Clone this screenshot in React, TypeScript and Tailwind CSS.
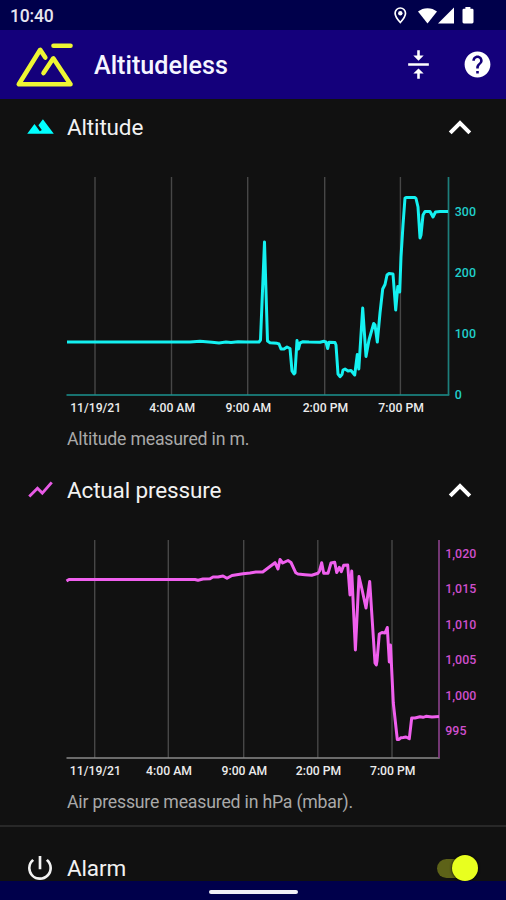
import React from 'react';
import { MdHelp, MdPowerSettingsNew, MdTerrain, MdVerticalAlignCenter } from 'react-icons/md';

interface Tick {
  pos: number;
  label: string;
}

interface ChartProps {
  points: string;
  stroke: string;
  axisColor: string;
  baseColor: string;
  labelColor: string;
  right: number;
  xTicks: Tick[];
  yTicks: Tick[];
}

const altitudePoints =
  '67,165 190,165 200,164.2 212,165.3 219,166 226,165 231,165.5 238,164.7 246,165 259,165 260.5,163 264.5,65 267.5,164 270,165.7 277,166.3 279,167 281,172 284,172 287,170 290,171.5 292,194 294,197 295,196 297,163.5 298.5,172 300,166 303,164.7 309,165 320,165.3 324,164.3 326,165 327.7,171.5 329,165.3 335,165.5 336,168 338,197 340,199.7 342,197.5 343,193 345,192 348,194 351,193.5 354.7,198 357.3,177.5 358.8,192 362.7,131 366,179.5 369,163 373.7,146.5 375,148 377.3,165 380,136 382.7,112 385,107.5 387,98 389,96.5 393,97 395.7,133 397.8,109.5 399.7,115 401,80 403,48 405,21 406,20.5 415,20.5 416,21.5 418,30 420,61 421,58 423,38 425,34.5 430,34.5 433,40 435.5,35 440,34.5 448,34.5';

const pressurePoints =
  '66.5,41 69,39.5 110,39.5 195,39.5 198,40.3 203,39 210,38.7 213,37 218,37 223,36 227,38.3 232,35.5 243,33.7 250,33 256,32 262.7,32 268,28 275,22.7 278,29 280,19.5 282.7,23 288,20.5 291,22.5 295.7,32.7 298,34 305,34.7 311.7,35.3 318,33.3 319.5,31 321.7,22.7 323.7,33.3 328,33.3 331,23 334.7,22.3 336.7,32.5 339.3,27.3 341.3,31.7 343.7,25.3 347.7,25 350,55 351.7,31 355.4,110 359,36.5 361.7,48 366,68 369.7,41.5 375,123 376.3,125 377,121 379.3,94 382,92.5 385,93 387.3,87.5 389.3,122 390.5,105 393.3,163 397.3,199.5 399,199.5 401,197.7 403.3,197.5 406,197 409.3,198.7 411.7,178 415,178 420,176.7 423,177.3 426,176.3 432,177 439,176.5';

const Chart: React.FC<ChartProps> = ({ points, stroke, axisColor, baseColor, labelColor, right, xTicks, yTicks }) => (
  <svg className="block w-full h-[240px] font-medium" viewBox="0 0 506 240">
    {xTicks.map(tick => (
      <line key={tick.label} x1={tick.pos} y1="0" x2={tick.pos} y2="218" stroke="#474747" strokeWidth="1.4" />
    ))}
    <line x1="66.5" y1="218" x2={right + 0.8} y2="218" stroke={baseColor} strokeWidth="1.7" />
    <line x1={right} y1="0" x2={right} y2="218" stroke={axisColor} strokeWidth="1.7" />
    <polyline points={points} fill="none" stroke={stroke} strokeWidth="3" strokeLinejoin="round" />
    {xTicks.map(tick => (
      <text key={tick.label} x={tick.pos + 0.7} y="234.5" textAnchor="middle" fontSize="12.2" fill="#ececec">
        {tick.label}
      </text>
    ))}
    {yTicks.map(tick => (
      <text key={tick.label} x={right + 6.3} y={tick.pos + 4.4} fontSize="12.4" fill={labelColor}>
        {tick.label}
      </text>
    ))}
  </svg>
);

const ChevronUp: React.FC = () => (
  <svg className="w-6 h-4 mr-[34px]" viewBox="0 0 24 16" fill="none" stroke="#fff" strokeWidth="4">
    <path d="M2.2 13.8 12 4l9.8 9.8" />
  </svg>
);

const TrendIcon: React.FC = () => (
  <svg className="w-[29px] h-[29px]" viewBox="0 0 24 24" fill="none" stroke="#e85be6" strokeWidth="2.4">
    <path d="M2.7 17.8 9.5 11l4 4 7.8-8.9" />
  </svg>
);

interface SectionHeaderProps {
  icon: React.ReactNode;
  title: string;
}

const SectionHeader: React.FC<SectionHeaderProps> = ({ icon, title }) => (
  <div className="flex items-center h-[56px]">
    <div className="w-[67px] pl-[25.5px]">{icon}</div>
    <h2 className="flex-1 text-[22.5px] leading-7 tracking-[-0.15px] text-[#f2f2f2]">{title}</h2>
    <ChevronUp />
  </div>
);

const StatusBar: React.FC = () => (
  <div className="flex items-center justify-between h-[30px] bg-[#00004b] pl-[10px] text-white">
    <span className="text-[17.5px] font-medium tracking-[-0.2px] text-[#e6e6f0] pt-[3px]">10:40</span>
    <svg className="w-[116px] h-[30px]" viewBox="390 0 116 30" fill="#fff">
      <path
        d="M400.3 8a5.2 5.2 0 0 0-5.2 5.2c0 3.6 5.2 9.3 5.2 9.3s5.2-5.7 5.2-9.3a5.2 5.2 0 0 0-5.2-5.2z"
        fill="none"
        stroke="#fff"
        strokeWidth="1.7"
      />
      <circle cx="400.3" cy="13.3" r="2.2" />
      <path d="M427.5 23.5 418 11.6a15 15 0 0 1 19 0z" />
      <path d="M454 7.5v16h-16z" />
      <path d="M465.4 8.7V7h5v1.7h1.7a1.4 1.4 0 0 1 1.4 1.4v12a1.4 1.4 0 0 1-1.4 1.4h-8.2a1.4 1.4 0 0 1-1.4-1.4v-12a1.4 1.4 0 0 1 1.4-1.4z" />
    </svg>
  </div>
);

const Logo: React.FC = () => (
  <svg className="w-[60px] h-12" viewBox="15 39.5 60 48" fill="none" stroke="#eef633" strokeWidth="4.6" strokeLinecap="round" strokeLinejoin="round">
    <path d="M45.3 57 40.2 49.3 18.8 83.8H70.5L53.3 57.8 43.5 72.5" />
    <path d="M53.5 45.2h17" />
  </svg>
);

const App: React.FC = () => {
  return (
    <div className="flex flex-col w-[506px] h-[900px] overflow-hidden bg-[#111111] font-[Roboto,sans-serif] text-white">
      <StatusBar />

      <header className="flex items-center h-[68.5px] shrink-0 bg-[#14007b] pl-[15px] pr-[13.5px]">
        <Logo />
        <h1 className="flex-1 pl-[19px] pt-[3px] text-[25.2px] font-medium text-[#f5f5ff]">Altitudeless</h1>
        <MdVerticalAlignCenter className="w-[31px] h-[31px] mr-7" />
        <MdHelp className="w-[31px] h-[31px]" />
      </header>

      <main className="flex-1 min-h-0 overflow-hidden">
        <section className="h-[363px]">
          <SectionHeader icon={<MdTerrain className="w-[29px] h-[29px] text-[#00ffff]" />} title="Altitude" />
          <div className="pt-[22px]">
            <Chart
              points={altitudePoints}
              stroke="#14f1f1"
              axisColor="#1d7f7c"
              baseColor="#1b9391"
              labelColor="#20cfcb"
              right={448.5}
              xTicks={[
                { pos: 95, label: '11/19/21' },
                { pos: 171.5, label: '4:00 AM' },
                { pos: 247.7, label: '9:00 AM' },
                { pos: 324.7, label: '2:00 PM' },
                { pos: 400.4, label: '7:00 PM' },
              ]}
              yTicks={[
                { pos: 34.5, label: '300' },
                { pos: 95.5, label: '200' },
                { pos: 156.5, label: '100' },
                { pos: 217.5, label: '0' },
              ]}
            />
          </div>
          <p className="pl-[67px] pt-[10px] text-[17.7px] leading-6 tracking-[-0.2px] text-[#a9a9a9]">
            Altitude measured in m.
          </p>
        </section>

        <section className="h-[363.5px]">
          <SectionHeader icon={<TrendIcon />} title="Actual pressure" />
          <div className="pt-[22px]">
            <Chart
              points={pressurePoints}
              stroke="#f060ee"
              axisColor="#853f85"
              baseColor="#8a8a8a"
              labelColor="#cf4fcd"
              right={439}
              xTicks={[
                { pos: 94.7, label: '11/19/21' },
                { pos: 168.3, label: '4:00 AM' },
                { pos: 243.7, label: '9:00 AM' },
                { pos: 317.8, label: '2:00 PM' },
                { pos: 392, label: '7:00 PM' },
              ]}
              yTicks={[
                { pos: 13.3, label: '1,020' },
                { pos: 48.8, label: '1,015' },
                { pos: 84.3, label: '1,010' },
                { pos: 119.7, label: '1,005' },
                { pos: 155.2, label: '1,000' },
                { pos: 190.6, label: '995' },
              ]}
            />
          </div>
          <p className="pl-[67px] pt-[10px] text-[17.7px] leading-6 tracking-[-0.2px] text-[#a9a9a9]">
            Air pressure measured in hPa (mbar).
          </p>
        </section>

        <section className="border-t-2 border-[#282828]">
          <div className="flex items-center h-[82px]">
            <div className="w-[67px] pl-6">
              <MdPowerSettingsNew className="w-8 h-8 text-[#f2f2f2]" />
            </div>
            <h2 className="flex-1 text-[22.5px] leading-7 tracking-[-0.15px] text-[#f2f2f2]">Alarm</h2>
            <div className="flex items-center justify-end w-[41px] h-[19px] mr-7 rounded-full bg-[#5d6218]">
              <div className="w-[26px] h-[26px] shrink-0 rounded-full bg-[#e8ff1f] shadow-[0_0_3px_#000]" />
            </div>
          </div>
        </section>
      </main>

      <footer className="flex justify-center h-[19px] shrink-0 bg-[#00004b] pt-[9px]">
        <div className="w-[89px] h-[3.5px] rounded-full bg-[#f0f0f5]" />
      </footer>
    </div>
  );
};

export default App;
